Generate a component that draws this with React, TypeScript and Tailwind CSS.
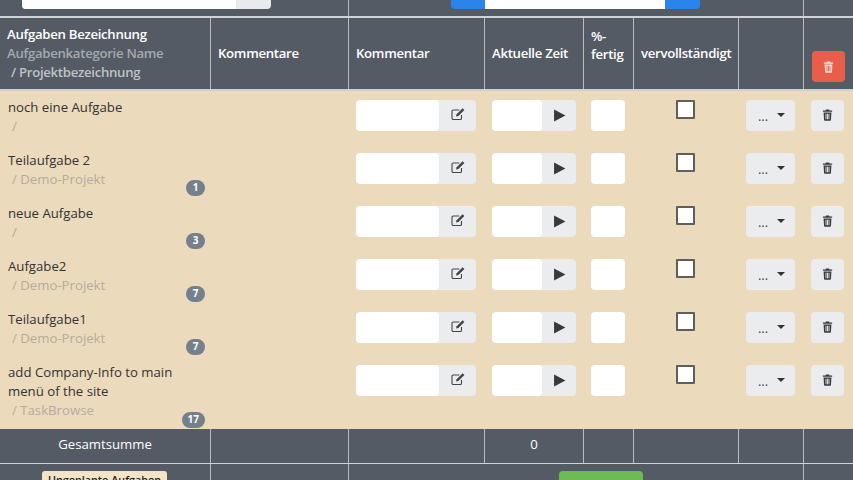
import React from "react";

const grid = "grid grid-cols-[210px_138px_136px_99px_50px_105px_65px_50px]";
const cell = "border-l border-[#b6bbc0] first:border-l-0";

function Trash({ className }: { className?: string }) {
  return (
    <svg viewBox="0 0 14 16" className={className} fill="currentColor">
      <path d="M5 0.5h4l0.8 1.6H13.2v1.6H0.8V2.1h3.4z" />
      <path fillRule="evenodd" d="M1.8 4.6h10.4l-0.6 10a1 1 0 0 1-1 0.9H3.4a1 1 0 0 1-1-0.9zM4.4 6.4v7.4h1.2V6.4zM6.4 6.4v7.4h1.2V6.4zM8.4 6.4v7.4h1.2V6.4z" />
    </svg>
  );
}

function Edit() {
  return (
    <svg viewBox="0 0 14 14" className="w-[14px] h-[14px] text-[#444]" fill="none" stroke="currentColor">
      <path d="M10.5 8v3.2a1.3 1.3 0 0 1-1.3 1.3H2.3A1.3 1.3 0 0 1 1 11.2V4.3A1.3 1.3 0 0 1 2.3 3h6" strokeWidth="1.1" />
      <path d="M5 9.6l0.6-2.4 6-6 1.8 1.8-6 6z" fill="currentColor" stroke="none" />
    </svg>
  );
}

function Row({ title, project, badge, tall }: { title: string[]; project: string; badge?: string; tall?: boolean }) {
  return (
    <div className={`${grid} ${tall ? "h-[73px]" : "h-[53px]"}`}>
      <div className="relative pl-2 pr-1 pt-[7px] text-[13.2px] leading-[19px] text-[#333]">
        {title.map((t) => (
          <div key={t}>{t}</div>
        ))}
        <div className="pl-1 text-[#b3aca0]">/ {project}</div>
        {badge && (
          <span className="absolute right-[5px] bottom-[1px] h-[16px] min-w-[19px] px-[6px] rounded-full bg-[#74808b] text-white text-[10px] leading-[15px] font-bold text-center">
            {badge}
          </span>
        )}
      </div>
      <div />
      <div className="pl-2 pt-[9px]">
        <div className="flex h-[31px] w-[120px] rounded-[4px] bg-[#ebecee] overflow-hidden">
          <div className="w-[83px] bg-white rounded-[4px]" />
          <div className="flex-1 flex items-center justify-center pb-[4px]">
            <Edit />
          </div>
        </div>
      </div>
      <div className="pl-2 pt-[9px]">
        <div className="flex h-[31px] w-[84px] rounded-[4px] bg-[#ebecee] overflow-hidden">
          <div className="w-[50px] bg-white rounded-[4px]" />
          <div className="flex-1 flex items-center justify-center">
            <svg viewBox="0 0 12 12" className="w-[13px] h-[13px] text-[#3a3a3a]" fill="currentColor">
              <path d="M1 0.5l10.5 5.5L1 11.5z" />
            </svg>
          </div>
        </div>
      </div>
      <div className="pl-2 pt-[9px]">
        <div className="h-[31px] w-[34px] rounded-[4px] bg-white" />
      </div>
      <div className="pt-[9px] flex justify-center">
        <div className="h-[19px] w-[19px] bg-white border-2 border-[#5f5f5b] rounded-[1px]" />
      </div>
      <div className="pl-[8px] pt-[9px]">
        <div className="h-[31px] w-[49px] rounded-[4px] bg-[#ebecee] flex items-center justify-center gap-[9px] text-[#444]">
          <span className="text-[13px] leading-none pl-[2px] pt-[1px]">...</span>
          <span className="w-0 h-0 border-x-[4px] border-x-transparent border-t-[4px] border-t-[#333] -mt-[1px]" />
        </div>
      </div>
      <div className="pl-[8px] pt-[9px]">
        <div className="h-[31px] w-[33px] rounded-[4px] bg-[#ebecee] flex items-center justify-center pb-[2px] text-[#3a3a3a]">
          <Trash className="w-[11px] h-[12px]" />
        </div>
      </div>
    </div>
  );
}

export default function App() {
  return (
    <div className="h-[480px] w-[853px] overflow-hidden bg-[#545b64] font-['Open_Sans',sans-serif] text-white">
      <div className={`${grid} h-[18px] border-b-2 border-[#ced2d6]`}>
        <div className="col-span-2 relative overflow-hidden">
          <div className="absolute left-[22px] bottom-[7px] h-[30px] w-[249px] rounded-[4px] bg-[#e9eaec] overflow-hidden flex">
            <div className="w-[214px] bg-white" />
          </div>
        </div>
        <div className={`${cell} col-span-5 relative overflow-hidden`}>
          <div className="absolute left-[102px] bottom-[7px] h-[30px] w-[249px] rounded-[4px] bg-[#2a84ea] overflow-hidden flex">
            <div className="ml-[34px] w-[180px] bg-white" />
          </div>
        </div>
        <div className={cell} />
      </div>

      <div className={`${grid} h-[73px] border-b-2 border-[#ced2d6] text-[13.2px] leading-[19px] font-semibold tracking-[-0.3px]`}>
        <div className="pl-[7px] pt-[7px]">
          <div>Aufgaben Bezeichnung</div>
          <div className="text-[#a5a9ae]">Aufgabenkategorie Name</div>
          <div className="pl-1 text-[#bfc2c6]">/ Projektbezeichnung</div>
        </div>
        <div className={`${cell} pl-[7px] flex items-center`}>Kommentare</div>
        <div className={`${cell} pl-[7px] flex items-center`}>Kommentar</div>
        <div className={`${cell} pl-[7px] flex items-center`}>Aktuelle Zeit</div>
        <div className={`${cell} pl-[7px] flex items-center pb-[18px] leading-[18px]`}>
          <div>
            %-
            <br />
            fertig
          </div>
        </div>
        <div className={`${cell} pl-[7px] flex items-center`}>vervollständigt</div>
        <div className={cell} />
        <div className={`${cell} relative`}>
          <button className="absolute left-[8px] top-[33px] h-[31px] w-[33px] rounded-[4px] bg-[#e85e4a] flex items-center justify-center text-[#f8e3df]">
            <Trash className="w-[11px] h-[12px]" />
          </button>
        </div>
      </div>

      <div className="bg-[#ecdabd]">
        <Row title={["noch eine Aufgabe"]} project="" />
        <Row title={["Teilaufgabe 2"]} project="Demo-Projekt" badge="1" />
        <Row title={["neue Aufgabe"]} project="" badge="3" />
        <Row title={["Aufgabe2"]} project="Demo-Projekt" badge="7" />
        <Row title={["Teilaufgabe1"]} project="Demo-Projekt" badge="7" />
        <Row title={["add Company-Info to main", "menü of the site"]} project="TaskBrowse" badge="17" tall />
      </div>

      <div className={`${grid} h-[35px] border-b border-[#ced2d6] text-[13.2px] leading-[31px]`}>
        <div className="text-center">Gesamtsumme</div>
        <div className={cell} />
        <div className={cell} />
        <div className={`${cell} text-center`}>0</div>
        <div className={cell} />
        <div className={cell} />
        <div className={cell} />
        <div className={cell} />
      </div>

      <div className={`${grid} h-[20px] overflow-hidden`}>
        <div className="pt-[7px] flex justify-center pr-[1px]">
          <span className="h-[24px] px-[6px] pt-[1px] rounded-[3px] bg-[#f3e4c8] text-[#222] text-[10.8px] font-semibold leading-[16px]">
            Ungeplante Aufgaben
          </span>
        </div>
        <div className={cell} />
        <div className={`${cell} col-span-5 pt-[7px] pl-[210px]`}>
          <div className="h-[24px] w-[84px] rounded-[4px] bg-[#6cbb53]" />
        </div>
        <div className={cell} />
      </div>
    </div>
  );
}
